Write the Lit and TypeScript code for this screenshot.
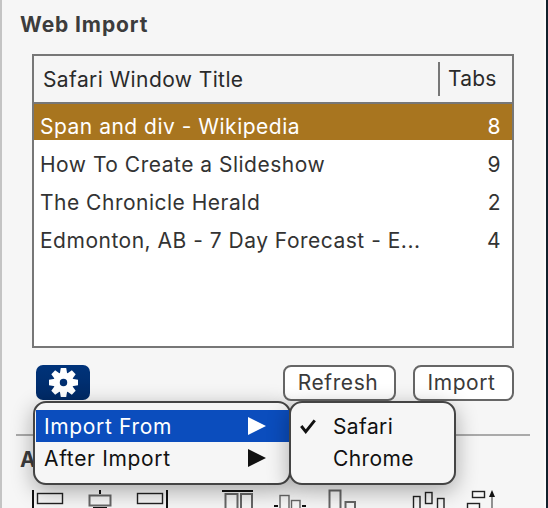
import { LitElement, html, css, svg } from "lit";
import { customElement } from "lit/decorators.js";

const rows: [string, string, boolean][] = [
  ["Span and div - Wikipedia", "8", true],
  ["How To Create a Slideshow", "9", false],
  ["The Chronicle Herald", "2", false],
  ["Edmonton, AB - 7 Day Forecast - E...", "4", false],
];

const gear = () => {
  const teeth = [0, 45, 90, 135, 180, 225, 270, 315].map(
    (a) => svg`<path d="M-2.6 -14H2.6L3.8 -7H-3.8Z" transform="rotate(${a})" />`
  );
  return html`<svg class="gear" viewBox="-14 -14 28 28" width="29" height="29">
    <g fill="#fff">${teeth}</g>
    <circle r="6.6" fill="none" stroke="#fff" stroke-width="6" />
  </svg>`;
};

const bottomIcons = svg`
  <g fill="none" stroke="#222" stroke-width="1.4">
    <rect x="37.5" y="493.5" width="25" height="10" />
    <rect x="89.5" y="495.5" width="21" height="10" stroke="#666" stroke-width="2" />
    <rect x="137.5" y="493.5" width="25" height="10" />
    <rect x="225.5" y="494" width="12" height="16" stroke="#666" stroke-width="2" />
    <rect x="241" y="494" width="11" height="16" stroke="#666" stroke-width="2" />
    <rect x="280" y="495.5" width="9" height="14" stroke="#666" />
    <rect x="291.5" y="500.5" width="8.5" height="9" stroke="#666" />
    <rect x="329.5" y="490.5" width="11" height="19" stroke="#666" stroke-width="2" />
    <rect x="345.5" y="502" width="9.5" height="8" stroke="#666" stroke-width="2" />
    <rect x="413.5" y="496.5" width="6.5" height="13" />
    <rect x="425.5" y="492.5" width="6.5" height="11" />
    <rect x="437.5" y="498.5" width="6.5" height="11" />
    <rect x="472.5" y="491.5" width="12" height="6" />
    <rect x="467.5" y="503.5" width="12" height="6" />
    <path d="M492 510V494" stroke="#666" />
  </g>
  <g fill="#111">
    <rect x="32" y="490" width="2" height="18" />
    <rect x="99" y="490" width="2" height="4" />
    <rect x="93" y="507" width="14" height="1" />
    <rect x="166" y="490" width="2" height="18" />
    <rect x="222" y="490" width="31" height="2" />
    <rect x="274" y="505" width="4" height="2" />
    <rect x="302" y="505" width="4" height="2" />
    <path d="M489 497l3-7 3 7z" />
  </g>
`;

@customElement("app-root")
export class AppRoot extends LitElement {
  static styles = css`
    :host {
      display: block;
      width: 548px;
      height: 508px;
      overflow: hidden;
      position: relative;
      font-family: Inter, "Liberation Sans", sans-serif;
      background: #12202c;
      color: #222;
    }
    .panel {
      box-sizing: border-box;
      width: 546px;
      height: 508px;
      background: #f6f6f6;
      border-left: 2px solid #c4c4c4;
      border-right: 2px solid #fbfbfb;
      padding: 13px 0 0 19px;
      overflow: hidden;
    }
    h2 {
      margin: 0 0 0 -1px;
      font-size: 21px;
      letter-spacing: 0.9px;
      line-height: 24px;
      font-weight: 700;
      color: #3c3c3c;
    }
    .table {
      box-sizing: border-box;
      width: 482px;
      height: 294px;
      margin: 17px 0 0 11px;
      border: 2px solid #777;
      background: #fff;
      font-size: 21px;
      letter-spacing: 0.5px;
    }
    .head {
      display: flex;
      align-items: center;
      height: 48px;
      box-sizing: border-box;
      border-bottom: 2px solid #777;
      background: #f5f5f5;
      color: #2a2a2a;
      letter-spacing: 0.4px;
    }
    .head .title { flex: 1; padding-left: 9px; }
    .head .tabs {
      width: 74px;
      height: 34px;
      box-sizing: border-box;
      border-left: 2px solid #777;
      padding-left: 8px;
      line-height: 34px;
      letter-spacing: 0.2px;
    }
    .row {
      display: flex;
      justify-content: space-between;
      align-items: center;
      height: 38px;
      padding: 0 11px 0 6px;
      color: #333;
    }
    .row.sel {
      height: 36px;
      background: #a8751f;
      color: #fff;
      padding-top: 8px;
      box-sizing: border-box;
      margin-bottom: 5px;
    }
    .actions {
      display: flex;
      align-items: flex-start;
      margin: 17px 0 0 15px;
      width: 478px;
    }
    .gearbtn {
      width: 54px;
      height: 35px;
      border-radius: 7px;
      background: linear-gradient(#00337a, #002a66);
      display: flex;
      align-items: center;
      justify-content: center;
    }
    .btn {
      box-sizing: border-box;
      height: 36px;
      border: 2px solid #666;
      border-radius: 8px;
      background: #fff;
      font-size: 21px;
      letter-spacing: 0.6px;
      line-height: 32px;
      text-align: center;
      color: #3a3a3a;
    }
    .refresh { width: 113px; margin-left: auto; padding-right: 3px; }
    .import { width: 101px; margin-left: 17px; padding-right: 4px; }
    .divider {
      height: 2px;
      background: #aaa;
      width: 514px;
      margin: 33px 0 0 -5px;
    }
    .clipped {
      margin: 12px 0 0 -1px;
      font-size: 21px;
      font-weight: 700;
      color: #3c3c3c;
      line-height: 24px;
    }
    .icons { position: absolute; inset: 0; pointer-events: none; }
    .menu {
      position: absolute;
      top: 401px;
      height: 84px;
      box-sizing: border-box;
      background: #f6f6f6;
      border: 2px solid #444;
      border-radius: 13px;
      box-shadow: 0 6px 22px rgba(0, 0, 0, 0.32);
      padding: 7px 0 0 1px;
      font-size: 21px;
      letter-spacing: 0.65px;
      color: #111;
    }
    .m1 { left: 33px; width: 258px; }
    .m2 { left: 289px; width: 167px; padding-left: 0; }
    .item {
      display: flex;
      align-items: center;
      height: 32px;
      padding-left: 8px;
      position: relative;
    }
    .item.hot { background: #0b4dbd; color: #fff; }
    .tri {
      position: absolute;
      left: 212px;
      top: 7px;
      width: 0;
      height: 0;
      border-left: 18px solid currentColor;
      border-top: 9px solid transparent;
      border-bottom: 9px solid transparent;
    }
    .m2 .item { padding-left: 42px; letter-spacing: 0.4px; }
    .check { position: absolute; left: 8px; top: 8px; }
  `;

  render() {
    return html`
      <div class="panel">
        <h2>Web Import</h2>
        <div class="table">
          <div class="head">
            <div class="title">Safari Window Title</div>
            <div class="tabs">Tabs</div>
          </div>
          ${rows.map(
            ([t, n, s]) => html`<div class="row ${s ? "sel" : ""}"><span>${t}</span><span>${n}</span></div>`
          )}
        </div>
        <div class="actions">
          <div class="gearbtn">${gear()}</div>
          <div class="btn refresh">Refresh</div>
          <div class="btn import">Import</div>
        </div>
        <div class="divider"></div>
        <div class="clipped">A</div>
      </div>
      <svg class="icons" width="548" height="508" viewBox="0 0 548 508">${bottomIcons}</svg>
      <div class="menu m1">
        <div class="item hot">Import From<span class="tri"></span></div>
        <div class="item">After Import<span class="tri"></span></div>
      </div>
      <div class="menu m2">
        <div class="item">
          <svg class="check" width="18" height="16" viewBox="0 0 16 14"><path d="M2 7l4 5 8-10" fill="none" stroke="#111" stroke-width="2.6" /></svg>
          Safari
        </div>
        <div class="item">Chrome</div>
      </div>
    `;
  }
}
